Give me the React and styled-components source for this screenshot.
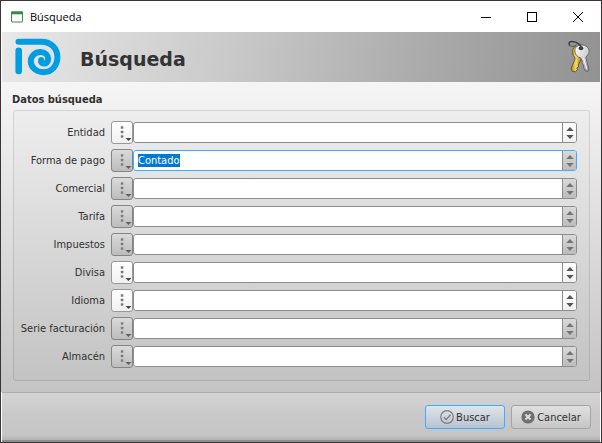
import React, { useEffect, useRef, useState } from "react";
import styled, { createGlobalStyle, css } from "styled-components";

const GlobalStyle = createGlobalStyle`
    * {
        box-sizing: border-box;
    }
    body {
        margin: 0;
        color: #303030;
        font-family: "DejaVu Sans Condensed", "Open Sans", sans-serif;
        font-size: 11px;
    }
    button, input {
        font: inherit;
        color: inherit;
    }
`;

const Window = styled.div`
    display: flex;
    flex-direction: column;
    min-height: 100vh;
    border: 1px solid #3a3638;
    background: #fff;
`;

const TitleBar = styled.div`
    display: flex;
    align-items: center;
    height: 31px;
    padding-left: 10px;
    color: #000;
    font-family: "Open Sans", sans-serif;
    font-size: 11px;
`;

const TitleText = styled.span`
    flex: 1;
    padding-left: 7px;
`;

const WindowButton = styled.button`
    display: flex;
    align-items: center;
    justify-content: center;
    width: 46px;
    height: 29px;
    padding: 0;
    border: none;
    background: transparent;
`;

const Header = styled.header`
    display: flex;
    align-items: center;
    height: 50px;
    margin: 0 1px;
    padding: 0 9px 0 12px;
    background: linear-gradient(100deg, #e8e8e8 0%, #cbcbcb 36%, #a9a9a9 72%, #929292 100%);
`;

const HeaderTitle = styled.h1`
    flex: 1;
    margin: 0;
    padding: 3px 0 0 18px;
    color: #333;
    font-family: "DejaVu Sans", sans-serif;
    font-size: 19px;
    font-weight: bold;
`;

const Body = styled.main`
    flex: 1;
    padding: 9px 11px 10px 11px;
    background: linear-gradient(#f5f5f5, #c4c4c4);
`;

const GroupTitle = styled.h2`
    margin: 0;
    font-size: 11px;
    font-weight: bold;
    line-height: 18px;
`;

const Group = styled.div`
    display: flex;
    flex-direction: column;
    gap: 5px;
    margin: 1px 0 0 1px;
    padding: 10px 12px 12px 2px;
    border: 1px solid rgba(0, 0, 0, 0.11);
    border-radius: 3px;
    background: rgba(0, 0, 0, 0.01);
`;

const Row = styled.div`
    display: grid;
    grid-template-columns: 95px 22px 1fr;
    align-items: center;
    height: 23px;
`;

const Label = styled.label`
    text-align: right;
    padding-right: 6px;
    white-space: nowrap;
`;

const raised = css`
    background: ${({ $light }) =>
        $light ? "linear-gradient(#ffffff, #f0f0f0)" : "linear-gradient(#dadada, #bcbcbc)"};
`;

const MenuButton = styled.button`
    display: flex;
    height: 23px;
    padding: 0;
    border: 1px solid ${({ $light }) => ($light ? "#989898" : "#858585")};
    border-radius: 3px;
    ${raised}
`;

const Field = styled.div`
    display: flex;
    height: 21px;
    overflow: hidden;
    border: 1px solid #8c8c8c;
    border-radius: 3px;
    background: #fff;

    &:focus-within {
        border-color: #3daeff;
    }
`;

const Input = styled.input`
    flex: 1;
    min-width: 0;
    padding: 0 4px;
    border: none;
    outline: none;
    background: transparent;

    &::selection {
        background: #0078d7;
        color: #fff;
    }
`;

const Spin = styled.div`
    display: flex;
    flex-direction: column;
    justify-content: center;
    gap: 4px;
    width: 14px;
    border-left: 1px solid #8c8c8c;
    ${raised}
`;

const SpinButton = styled.button`
    display: flex;
    justify-content: center;
    padding: 0;
    border: none;
    background: transparent;
    color: ${({ $light }) => ($light ? "#555" : "#747474")};
`;

const Footer = styled.footer`
    display: flex;
    justify-content: flex-end;
    gap: 6px;
    margin: 0 1px;
    padding: 12px 9px 11px;
    border-top: 1px solid #adadad;
    border-bottom: 2px solid #8e8e8e;
    background: linear-gradient(#d4d4d4, #c8c8c8 50%, #c6c6c6 88%, #b4b4b4);
`;

const Action = styled.button`
    display: flex;
    align-items: center;
    justify-content: center;
    gap: 2px;
    width: 80px;
    height: 24px;
    padding: 0;
    border: 1px solid ${({ $primary }) => ($primary ? "#3daeff" : "#a4a4a4")};
    border-radius: 3px;
    background: ${({ $primary }) =>
        $primary ? "linear-gradient(#dfe4eb, #b9c3d0)" : "linear-gradient(#e0e0e0, #c6c6c6)"};
`;

const WindowIcon = () => (
    <svg width="12" height="12" viewBox="0 0 12 12">
        <rect x="0.5" y="1" width="11" height="10" rx="0.5" fill="#fff" stroke="#388a3c" />
        <path d="M0 0.5h12v2.8H0z" fill="#388a3c" />
    </svg>
);

const Logo = () => (
    <svg width="48" height="40" viewBox="0 0 48 40" fill="none" stroke="#009ee0" strokeLinecap="round">
        <path d="M4.7 13.8V34" strokeWidth="6.6" />
        <path
            d="M4.5 4.8H27.5C37 4.8 43.4 11.5 43.4 20C43.4 29 37.5 35.2 29.5 35.2C22 35.2 16.8 30 16.8 24.3C16.8 18.8 21.3 15 26.3 15C31.2 15 34.2 18.3 34.2 21.8C34.2 25 32 26.8 29.6 26.6C27.6 26.4 26.6 24.8 27.2 23"
            strokeWidth="6"
        />
    </svg>
);

const Keys = () => (
    <svg width="24" height="34" viewBox="0 0 24 34">
        <defs>
            <linearGradient id="gold" x1="0" x2="1">
                <stop offset="0" stopColor="#b88a18" />
                <stop offset="0.45" stopColor="#f6dc70" />
                <stop offset="1" stopColor="#96690a" />
            </linearGradient>
            <linearGradient id="silver" x1="0" x2="1" y2="1">
                <stop offset="0" stopColor="#fdfdfd" />
                <stop offset="0.6" stopColor="#d0d0d2" />
                <stop offset="1" stopColor="#858588" />
            </linearGradient>
        </defs>
        <path
            d="M9 6.5C5.2 7.5 4.6 13.5 7.4 17L8.2 18.5L4.2 28.5L5.1 31.2L8.5 31.8L10.4 29.5L9.8 28L11.6 26.5L11.4 24.5L15 18L15 7Z"
            fill="url(#gold)"
            stroke="#62480c"
            strokeWidth="0.8"
        />
        <path
            d="M14 5C9.5 5.2 7.4 8.4 8 12C8.5 15.2 11 17.4 13.6 17.8L15.4 21L15 23L16.6 25L16.3 27L18.1 30.8L20.6 31.6L22 29.4L18.8 17.4L21.8 13.4C23.4 8.6 18.9 4.4 14 5Z"
            fill="url(#silver)"
            stroke="#5b5b5d"
            strokeWidth="0.8"
        />
        <path d="M16.4 17.8L20 29.5" stroke="#f5f5f5" />
        <ellipse cx="14" cy="8.2" rx="2.3" ry="2" fill="#3a3a3a" />
        <path
            d="M14 8.4C14.8 5.2 10 1.8 5 1.6C1.8 1.5 1.2 3.8 3 5.6"
            fill="none"
            stroke="#3d3d3d"
            strokeWidth="1.5"
        />
        <path d="M3 5.6C5.4 7.2 8 6.2 9.4 5" fill="none" stroke="#555" />
    </svg>
);

const DotsIcon = ({ light }) => (
    <svg width="20" height="21" viewBox="0 0 20 21" fill={light ? "#777" : "#7c7c7c"}>
        <rect x="8.8" y="4.3" width="2.5" height="2.5" rx="0.5" />
        <rect x="8.8" y="8.8" width="2.5" height="2.5" rx="0.5" />
        <rect x="8.8" y="13.3" width="2.5" height="2.5" rx="0.5" />
        <path d="M13.5 16h6l-3 3z" fill={light ? "#444" : "#606060"} />
    </svg>
);

const Arrow = ({ down }) => (
    <svg width="8" height="4" viewBox="0 0 8 4" fill="currentColor">
        <path d={down ? "M0.3 0h7.4L4 4z" : "M0.3 4h7.4L4 0z"} />
    </svg>
);

const CheckIcon = () => (
    <svg width="14" height="14" viewBox="0 0 14 14" fill="none" stroke="#7d7d7d">
        <circle cx="7" cy="7" r="6.3" strokeWidth="1.2" />
        <path d="M3.8 7.2L6.2 9.6L10.5 4.8" strokeWidth="1.4" />
    </svg>
);

const CrossIcon = () => (
    <svg width="14" height="14" viewBox="0 0 14 14">
        <circle cx="7" cy="7" r="6.6" fill="#6f6f6f" />
        <path d="M4.5 4.5L9.5 9.5M9.5 4.5L4.5 9.5" stroke="#dcdcdc" strokeWidth="2" />
    </svg>
);

const fields = [
    { id: "entidad", label: "Entidad", light: true },
    { id: "formapago", label: "Forma de pago", value: "Contado" },
    { id: "comercial", label: "Comercial" },
    { id: "tarifa", label: "Tarifa" },
    { id: "impuestos", label: "Impuestos" },
    { id: "divisa", label: "Divisa", light: true },
    { id: "idioma", label: "Idioma", light: true },
    { id: "serie", label: "Serie facturación" },
    { id: "almacen", label: "Almacén" },
];

const SearchField = ({ id, label, value = "", light }) => {
    const [text, setText] = useState(value);
    const input = useRef(null);

    useEffect(() => {
        if (value) {
            input.current.focus();
            input.current.select();
        }
    }, [value]);

    return (
        <Row>
            <Label htmlFor={id}>{label}</Label>
            <MenuButton type="button" $light={light} aria-label={"Opciones " + label}>
                <DotsIcon light={light} />
            </MenuButton>
            <Field>
                <Input
                    id={id}
                    ref={input}
                    type="text"
                    autoComplete="off"
                    spellCheck={false}
                    value={text}
                    onChange={(e) => setText(e.target.value)}
                />
                <Spin $light={light}>
                    <SpinButton type="button" $light={light} aria-label="Anterior">
                        <Arrow />
                    </SpinButton>
                    <SpinButton type="button" $light={light} aria-label="Siguiente">
                        <Arrow down />
                    </SpinButton>
                </Spin>
            </Field>
        </Row>
    );
};

const App = () => {
    return (
        <>
            <GlobalStyle />
            <Window>
                <TitleBar>
                    <WindowIcon />
                    <TitleText>Búsqueda</TitleText>
                    <WindowButton type="button" aria-label="Minimizar">
                        <svg width="10" height="10" stroke="#000">
                            <path d="M0 5.5h10" />
                        </svg>
                    </WindowButton>
                    <WindowButton type="button" aria-label="Maximizar">
                        <svg width="10" height="10" fill="none" stroke="#000">
                            <rect x="0.5" y="0.5" width="9" height="9" />
                        </svg>
                    </WindowButton>
                    <WindowButton type="button" aria-label="Cerrar">
                        <svg width="10" height="10" stroke="#000">
                            <path d="M0 0L10 10M10 0L0 10" />
                        </svg>
                    </WindowButton>
                </TitleBar>
                <Header>
                    <Logo />
                    <HeaderTitle>Búsqueda</HeaderTitle>
                    <Keys />
                </Header>
                <Body>
                    <GroupTitle>Datos búsqueda</GroupTitle>
                    <Group>
                        {fields.map((field) => (
                            <SearchField key={field.id} {...field} />
                        ))}
                    </Group>
                </Body>
                <Footer>
                    <Action type="button" $primary>
                        <CheckIcon />
                        Buscar
                    </Action>
                    <Action type="button">
                        <CrossIcon />
                        Cancelar
                    </Action>
                </Footer>
            </Window>
        </>
    );
};

export default App;
